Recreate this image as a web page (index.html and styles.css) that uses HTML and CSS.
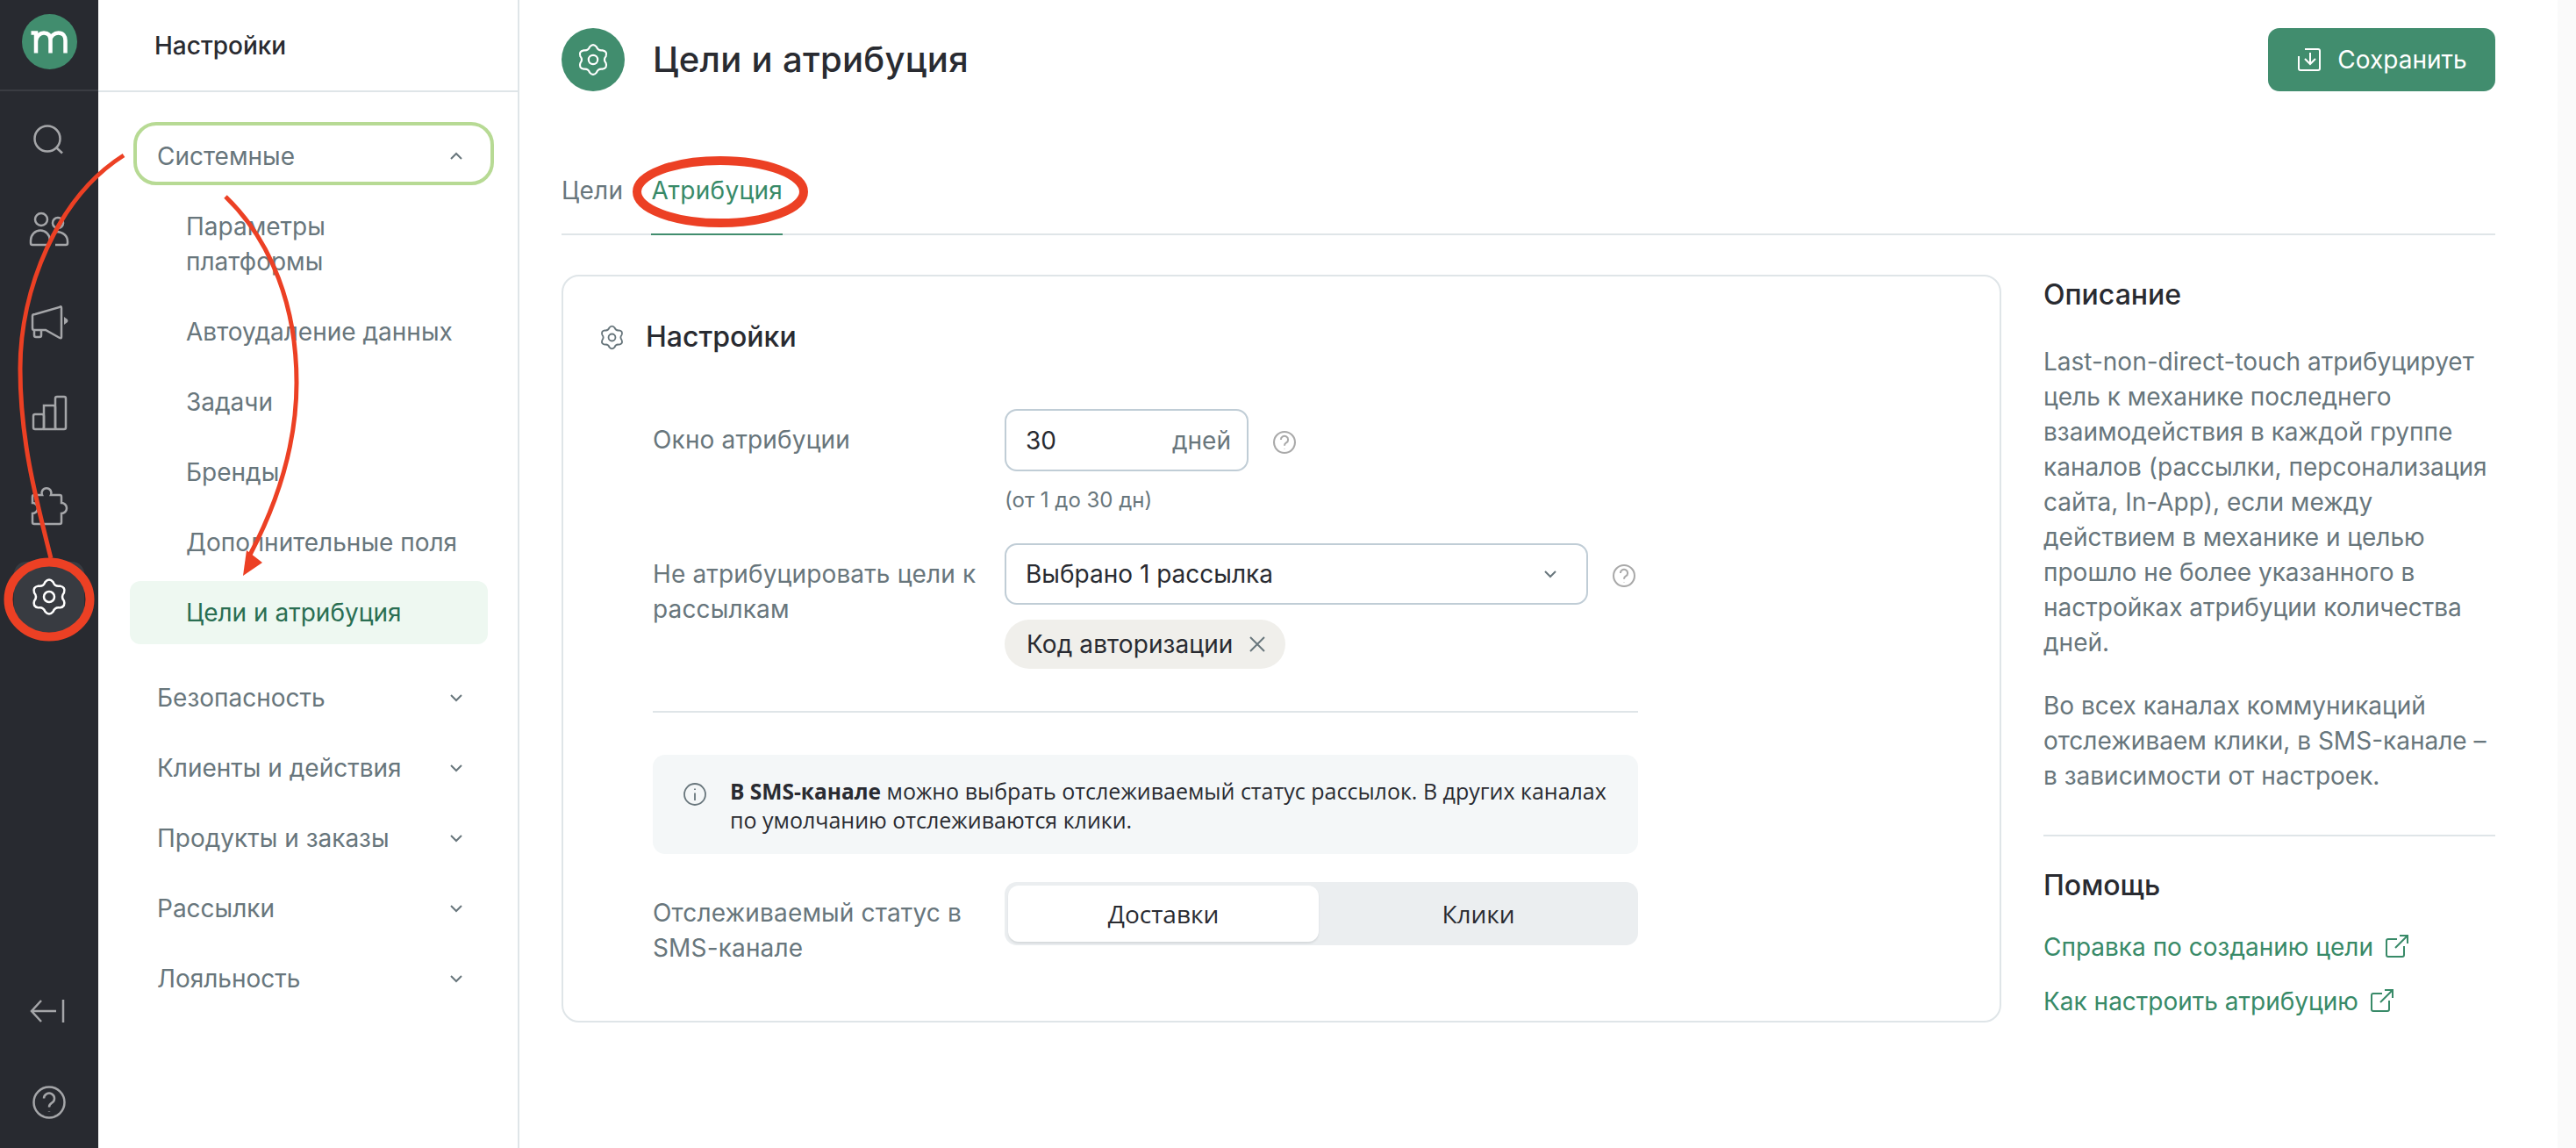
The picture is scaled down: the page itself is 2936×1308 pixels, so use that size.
FILE: index.html
```html
<!DOCTYPE html>
<html lang="ru">
<head>
	<meta charset="utf-8">
	<title>Цели и атрибуция</title>
	<link rel="stylesheet" href="styles.css">
</head>
<body>
	<svg class="defs" xmlns="http://www.w3.org/2000/svg">
		<symbol id="gear" viewBox="-22 -22 44 44">
			<path d="M-4.53 -16.9 Q0 -22.1 4.53 -16.9 Q6.55 -11.35 12.37 -12.37 Q19.14 -11.05 16.9 -4.53 Q13.1 0 16.9 4.53 Q19.14 11.05 12.37 12.37 Q6.55 11.35 4.53 16.9 Q0 22.1 -4.53 16.9 Q-6.55 11.35 -12.37 12.37 Q-19.14 11.05 -16.9 4.53 Q-13.1 0 -16.9 -4.53 Q-19.14 -11.05 -12.37 -12.37 Q-6.55 -11.35 -4.53 -16.9 Z"/>
			<circle cx="0" cy="0" r="6"/>
		</symbol>
		<symbol id="help" viewBox="0 0 38 38">
			<circle cx="19" cy="19" r="17.5"/>
			<path d="M13 14.5 a6 6 0 1 1 9 5.2 c-2 1.2 -3 2.4 -3 4.8"/>
			<path d="M19 29.5 v0.5"/>
		</symbol>
		<symbol id="chev" viewBox="0 0 16 10">
			<path d="M2 2 L8 8 L14 2"/>
		</symbol>
		<symbol id="ext" viewBox="0 0 26 26">
			<path d="M13 5 H3 a2 2 0 0 0 -2 2 V23 a2 2 0 0 0 2 2 H19 a2 2 0 0 0 2 -2 V13"/>
			<path d="M11 15 L25 1 M16 1 H25 V10"/>
		</symbol>
	</svg>

	<nav class="rail">
		<div class="rail-head">
			<svg class="logo" viewBox="0 0 63 63" width="63" height="63">
				<circle cx="31.5" cy="31.5" r="31.5" fill="#418d6e"/>
				<path d="M10.5 21.5 H16 V44.5 M16 31 C16 25 21 21.5 25 21.5 C30.5 21.5 32.5 25 32.5 30 V44.5 M32.5 30 C32.5 25 37 21.5 41.5 21.5 C47 21.5 49.5 25 49.5 30 V44.5" fill="none" stroke="#fff" stroke-width="4.5"/>
			</svg>
		</div>
		<div class="rail-list">
			<a class="rail-item"><svg class="rail-icon" viewBox="0 0 60 60"><circle cx="28" cy="30" r="14.5"/><path d="M38.5 40.5 L45 46.5"/></svg></a>
			<a class="rail-item"><svg class="rail-icon" viewBox="0 0 60 60"><circle cx="21" cy="18" r="7"/><circle cx="40" cy="22" r="6"/><path d="M11 47 a2 2 0 0 1 -2 -2 v-3 a11 11.5 0 0 1 22 0 M11 47 H30"/><path d="M38 32 c8 0 13 5 13 11 v2 a2 2 0 0 1 -2 2 H37"/></svg></a>
			<a class="rail-item"><svg class="rail-icon" viewBox="0 0 60 60"><path d="M14 21 L42 13 Q44 11 44 14 V47 Q44 49 42 48 L26 39 H13 Q11 39 11 37 V23 Q11 21 14 21 Z"/><path d="M13 39 v6 a2 2 0 0 0 2 2 h4 a2 2 0 0 0 2 -2 v-6"/><path class="solid" d="M47 24 L51 27 Q52 28.500 51 30 L47 33 Z"/></svg></a>
			<a class="rail-item"><svg class="rail-icon" viewBox="0 0 60 60"><rect x="12" y="31" width="12" height="17" rx="2"/><path d="M24 21 h11 a2 2 0 0 1 2 2 V48 H24 Z"/><rect x="37" y="11" width="12" height="37" rx="2"/></svg></a>
			<a class="rail-item"><svg class="rail-icon" viewBox="0 0 60 60"><path d="M13 18 H22 a5.500 5.500 0 1 1 10 0 H42 a2 2 0 0 1 2 2 V27 a6 6 0 1 1 0 12 V49 a2 2 0 0 1 -2 2 H13 a2 2 0 0 1 -2 -2 V39 a6 6 0 0 0 0 -12 V20 a2 2 0 0 1 2 -2 Z"/></svg></a>
			<a class="rail-item rail-item-active"><svg class="rail-gear"><use href="#gear"/></svg></a>
		</div>
		<div class="rail-list rail-bottom">
			<a class="rail-item"><svg class="rail-icon" viewBox="0 0 60 60"><path d="M11 30 H38 M21 18 L10 30 L21 42"/><path d="M46 17 V43"/></svg></a>
			<a class="rail-item"><svg class="rail-help"><use href="#help"/></svg></a>
		</div>
	</nav>

	<aside class="side">
		<div class="side-head">Настройки</div>
		<div class="nav">
			<div class="nav-row">Системные <svg class="chev chev-up"><use href="#chev"/></svg></div>
			<a class="nav-sub">Параметры<br>платформы</a>
			<a class="nav-sub">Автоудаление данных</a>
			<a class="nav-sub">Задачи</a>
			<a class="nav-sub">Бренды</a>
			<a class="nav-sub">Дополнительные поля</a>
			<a class="nav-sub nav-sub-active">Цели и атрибуция</a>
			<div class="nav-row nav-row-first">Безопасность <svg class="chev"><use href="#chev"/></svg></div>
			<div class="nav-row">Клиенты и действия <svg class="chev"><use href="#chev"/></svg></div>
			<div class="nav-row">Продукты и заказы <svg class="chev"><use href="#chev"/></svg></div>
			<div class="nav-row">Рассылки <svg class="chev"><use href="#chev"/></svg></div>
			<div class="nav-row">Лояльность <svg class="chev"><use href="#chev"/></svg></div>
		</div>
	</aside>

	<main class="main">
		<header class="head">
			<span class="head-icon"><svg class="head-gear"><use href="#gear"/></svg></span>
			<h1 class="title">Цели и атрибуция</h1>
			<button class="save">
				<svg class="save-icon" viewBox="0 0 26 26"><path d="M8 1 H23 a2 2 0 0 1 2 2 V23 a2 2 0 0 1 -2 2 H3 a2 2 0 0 1 -2 -2 V9"/><path d="M14 5 V18 M8 12 L14 18 L20 12"/></svg>
				Сохранить
			</button>
		</header>

		<div class="tabs">
			<a class="tab">Цели</a>
			<a class="tab tab-active">Атрибуция</a>
		</div>

		<div class="content">
			<section class="card">
				<div class="card-head">
					<svg class="card-gear"><use href="#gear"/></svg>
					<h2 class="card-title">Настройки</h2>
				</div>
				<div class="form">
					<div class="row">
						<label class="label">Окно атрибуции</label>
						<div class="ctl">
							<div class="ctl-line">
								<div class="input"><span>30</span><span class="unit">дней</span></div>
								<svg class="help"><use href="#help"/></svg>
							</div>
							<div class="hint">(от 1 до 30 дн)</div>
						</div>
					</div>
					<div class="row row-second">
						<label class="label">Не атрибуцировать цели к рассылкам</label>
						<div class="ctl">
							<div class="ctl-line">
								<div class="select">Выбрано 1 рассылка <svg class="chev"><use href="#chev"/></svg></div>
								<svg class="help"><use href="#help"/></svg>
							</div>
							<div class="chip">Код авторизации
								<svg class="chip-x" viewBox="0 0 18 18"><path d="M1 1 L17 17 M17 1 L1 17"/></svg>
							</div>
						</div>
					</div>
					<hr class="line">
					<div class="info">
						<svg class="info-icon" viewBox="0 0 26 26"><circle cx="13" cy="13" r="12"/><path d="M13 11.500 V20 M13 6.500 V8"/></svg>
						<p class="info-text"><b>В SMS-канале</b> можно выбрать отслеживаемый статус рассылок. В других каналах по умолчанию отслеживаются клики.</p>
					</div>
					<div class="row row-third">
						<label class="label">Отслеживаемый статус в SMS-канале</label>
						<div class="segment">
							<span class="seg seg-active">Доставки</span>
							<span class="seg">Клики</span>
						</div>
					</div>
				</div>
			</section>

			<aside class="about">
				<h3 class="about-title">Описание</h3>
				<p class="about-text">Last-non-direct-touch атрибуцирует цель к механике последнего взаимодействия в каждой группе каналов (рассылки, персонализация сайта, In-App), если между действием в механике и целью прошло не более указанного в настройках атрибуции количества дней.</p>
				<p class="about-text about-text-next">Во всех каналах коммуникаций отслеживаем клики, в SMS-канале – в зависимости от настроек.</p>
				<hr class="line about-line">
				<h3 class="about-title">Помощь</h3>
				<a class="link link-first">Справка по созданию цели <svg class="ext"><use href="#ext"/></svg></a>
				<a class="link">Как настроить атрибуцию <svg class="ext"><use href="#ext"/></svg></a>
			</aside>
		</div>
	</main>

	<div class="scroll"></div>

	<!-- пометки поверх скриншота -->
	<svg class="marks" viewBox="0 0 2936 1308" width="2936" height="1308">
		<rect class="mark-green" x="154" y="141" width="407" height="68" rx="24"/>
		<ellipse class="mark-ring" cx="56" cy="683" rx="46.500" ry="42.500"/>
		<ellipse class="mark-ring" cx="821" cy="218.500" rx="95" ry="35.500"/>
		<path class="mark-line" d="M141 177 C65 225 23 330 23 420 C23 500 40 565 58 636"/>
		<path class="mark-line" d="M257 224 C310 275 338 350 338 436 C338 510 315 575 285 632"/>
		<path class="mark-head" d="M277 656 L281 627 L299 641 Z"/>
	</svg>
</body>
</html>
```

FILE: styles.css
```css
* {
	box-sizing: border-box;
}

html, body {
	margin: 0;
	height: 100%;
}

body {
	display: flex;
	position: relative;
	height: 1308px;
	overflow: hidden;
	background: #fff;
	color: #292b31;
	font-family: Inter, "Noto Sans", sans-serif;
	font-size: 28px;
	line-height: 40px;
}

h1, h2, h3, p {
	margin: 0;
	font-weight: 500;
}

.defs {
	position: absolute;
	width: 0;
	height: 0;
}

/* левая тёмная колонка */
.rail {
	display: flex;
	flex-direction: column;
	flex: none;
	width: 112px;
	background: #282a30;
}

.rail-head {
	display: flex;
	justify-content: center;
	height: 104px;
	padding-top: 16px;
	border-bottom: 2px solid #3a3c42;
}

.logo {
	display: block;
}

.rail-list {
	display: flex;
	flex-direction: column;
	gap: 24.4px;
	padding-top: 14px;
}

.rail-bottom {
	margin-top: auto;
	padding-top: 0;
	padding-bottom: 12px;
}

.rail-item {
	display: flex;
	align-items: center;
	justify-content: center;
	width: 80px;
	height: 80px;
	margin-left: 16px;
	border-radius: 14px;
}

.rail-item-active {
	background: #383b41;
}

.rail-icon {
	width: 60px;
	height: 60px;
	fill: none;
	stroke: #a5a6a9;
	stroke-width: 2.500;
}

.rail-icon .solid {
	fill: #a5a6a9;
	stroke: none;
}

.rail-gear {
	width: 44px;
	height: 44px;
	fill: none;
	stroke: #fff;
	stroke-width: 2.500;
}

.rail-help {
	width: 38px;
	height: 38px;
	fill: none;
	stroke: #a5a6a9;
	stroke-width: 2.500;
}

/* меню настроек */
.side {
	flex: none;
	width: 480px;
	border-right: 2px solid #dfe5e8;
}

.side-head {
	height: 105px;
	padding: 32px 0 0 64px;
	border-bottom: 2px solid #dfe5e8;
	font-weight: 500;
}

.nav {
	display: flex;
	flex-direction: column;
	gap: 8px;
	padding: 37px 34px 0 36px;
	color: #68767c;
}

.nav-row {
	display: flex;
	align-items: center;
	justify-content: space-between;
	height: 72px;
	padding: 0 28px 0 31px;
}

.nav-row-first {
	margin-top: 17px;
}

.nav-sub {
	display: block;
	padding: 16px 0 16px 64px;
	border-radius: 12px;
}

.nav-sub-active {
	background: #eef8f1;
	color: #2a6e52;
}

.chev {
	width: 16px;
	height: 10px;
	fill: none;
	stroke: #68767c;
	stroke-width: 2;
}

.chev-up {
	transform: rotate(180deg);
}

/* основная часть */
.main {
	flex: 1;
	padding: 32px 71px 0 48px;
}

.head {
	display: flex;
	align-items: center;
	height: 72px;
}

.head-icon {
	display: flex;
	align-items: center;
	justify-content: center;
	width: 72px;
	height: 72px;
	border-radius: 50%;
	background: #418d6e;
}

.head-gear {
	width: 38px;
	height: 38px;
	fill: none;
	stroke: #fff;
	stroke-width: 2.500;
}

.title {
	margin-left: 32px;
	font-size: 40px;
	line-height: 48px;
	letter-spacing: 0.3px;
}

.save {
	display: flex;
	align-items: center;
	justify-content: center;
	gap: 19px;
	width: 259px;
	height: 72px;
	margin-left: auto;
	padding: 0 0 0 2px;
	border: 0;
	border-radius: 13px;
	background: #418d6e;
	color: #fff;
	font: inherit;
}

.save-icon {
	width: 26px;
	height: 26px;
	fill: none;
	stroke: #fff;
	stroke-width: 2;
}

.tabs {
	display: flex;
	gap: 32px;
	margin-top: 93px;
	border-bottom: 2px solid #dfe5e8;
	letter-spacing: 0.3px;
}

.tab {
	padding-bottom: 29px;
	margin-bottom: -2px;
	border-bottom: 2px solid transparent;
	color: #68767c;
}

.tab-active {
	border-bottom-color: #418d6e;
	color: #388a68;
}

.content {
	display: flex;
	gap: 48px;
	margin-top: 45px;
}

.card {
	flex: none;
	width: 1641px;
	height: 852px;
	padding: 49px 0 0 41px;
	border: 2px solid #dfe5e8;
	border-radius: 20px;
}

.card-head {
	display: flex;
	align-items: center;
	gap: 24px;
}

.card-gear {
	width: 29px;
	height: 29px;
	fill: none;
	stroke: #68767c;
	stroke-width: 2.800;
}

.card-title {
	font-size: 32px;
}

.form {
	width: 1123px;
	margin: 62px 0 0 61px;
}

.row {
	display: grid;
	grid-template-columns: 401px 1fr;
}

.row-second {
	margin-top: 33px;
}

.row-third {
	margin-top: 32px;
}

.label {
	padding-top: 15px;
	padding-right: 10px;
	color: #68767c;
	letter-spacing: 0.15px;
}

.ctl-line {
	display: flex;
	align-items: center;
	gap: 28px;
}

.input {
	display: flex;
	align-items: center;
	justify-content: space-between;
	width: 278px;
	height: 71px;
	padding: 0 18px 0 22px;
	border: 2px solid #c0cdd6;
	border-radius: 14px;
}

.unit {
	color: #68767c;
}

.help {
	width: 26px;
	height: 26px;
	margin-top: 4px;
	fill: none;
	stroke: #a9a9a9;
	stroke-width: 3;
}

.hint {
	margin-top: 17px;
	color: #68767c;
	font-size: 24px;
	line-height: 32px;
}

.select {
	display: flex;
	align-items: center;
	justify-content: space-between;
	width: 665px;
	height: 70px;
	padding: 0 33px 0 22px;
	border: 2px solid #c0cdd6;
	border-radius: 14px;
}

.chip {
	display: inline-flex;
	align-items: center;
	gap: 19px;
	height: 56px;
	margin-top: 17px;
	padding: 0 23px 0 25px;
	border-radius: 28px;
	background: #f0efeb;
	letter-spacing: 0.1px;
}

.chip-x {
	width: 18px;
	height: 18px;
	fill: none;
	stroke: #68767c;
	stroke-width: 2;
}

.line {
	height: 2px;
	margin: 48px 0 0;
	border: 0;
	background: #dfe5e8;
}

.info {
	display: flex;
	gap: 27px;
	height: 113px;
	margin-top: 48px;
	padding: 25px 35px 0 35px;
	border-radius: 14px;
	background: #f4f7f8;
}

.info-icon {
	flex: none;
	width: 26px;
	height: 26px;
	margin-top: 7px;
	fill: none;
	stroke: #68767c;
	stroke-width: 1.800;
}

.info-text {
	font-family: "Open Sans", sans-serif;
	font-size: 25px;
	font-weight: 400;
	line-height: 33px;
}

.info-text b {
	font-size: 24.5px;
	font-weight: 700;
}

.segment {
	display: flex;
	height: 72px;
	padding: 4px 0 4px 4px;
	border-radius: 14px;
	background: #ebeef0;
	font-family: "Open Sans", sans-serif;
}

.seg {
	flex: 1;
	line-height: 64px;
	text-align: center;
}

.seg-active {
	flex: none;
	width: 354px;
	border-radius: 12px;
	background: #fff;
	box-shadow: 0 2px 2px #d6dadc;
}

/* правая колонка */
.about {
	flex: 1;
	padding-top: 3px;
}

.about-title {
	font-size: 32px;
}

.about-text {
	margin-top: 36px;
	color: #68767c;
	font-weight: 400;
}

.about-text-next {
	margin-top: 32px;
}

.about-line {
	margin: 47px 0 36px;
}

.link {
	display: block;
	margin-top: 22px;
	color: #388a68;
}

.link-first {
	margin-top: 30px;
}

.ext {
	width: 26px;
	height: 26px;
	margin-left: 6px;
	fill: none;
	stroke: #388a68;
	stroke-width: 2;
	vertical-align: -2px;
}

.scroll {
	flex: none;
	width: 21px;
	background: #fafafa;
}

/* пометки */
.marks {
	position: absolute;
	top: 0;
	left: 0;
	pointer-events: none;
}

.mark-green {
	fill: none;
	stroke: #b7da94;
	stroke-width: 4;
}

.mark-ring {
	fill: none;
	stroke: #ec4024;
	stroke-width: 10;
}

.mark-line {
	fill: none;
	stroke: #ec4024;
	stroke-width: 5;
}

.mark-head {
	fill: #ec4024;
}
```
